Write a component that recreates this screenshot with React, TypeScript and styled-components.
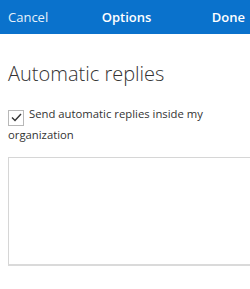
import React from "react";
import styled, { createGlobalStyle } from "styled-components";

const GlobalStyle = createGlobalStyle`
  body {
    margin: 0;
    background: #ffffff;
    font-family: "Open Sans", "Noto Sans", sans-serif;
  }
`;

const Page = styled.div`
  width: 250px;
  height: 289px;
  overflow: hidden;
  background: #ffffff;
`;

const Header = styled.header`
  height: 34px;
  background: #0a72cc;
  display: grid;
  grid-template-columns: 1fr auto 1fr;
  align-items: center;
  padding: 0 5px 0 8px;
  color: #ffffff;
`;

const HeaderButton = styled.span<{ $bold?: boolean }>`
  font-size: 13px;
  font-weight: ${(p) => (p.$bold ? 600 : 400)};
  opacity: ${(p) => (p.$bold ? 1 : 0.9)};
  justify-self: ${(p) => (p.$bold ? "end" : "start")};
`;

const Title = styled.span`
  font-size: 13px;
  font-weight: 600;
`;

const Content = styled.div`
  padding: 26px 0 0 8px;
`;

const Heading = styled.h1`
  margin: 0;
  font-size: 20px;
  font-weight: 300;
  color: #333333;
  line-height: 28px;
`;

const CheckRow = styled.label`
  margin-top: 17px;
  display: block;
  font-size: 11.3px;
  line-height: 18px;
  color: #333333;
  padding-right: 8px;
`;

const Box = styled.span`
  display: inline-flex;
  align-items: center;
  justify-content: center;
  width: 14px;
  height: 14px;
  border: 1px solid #b8b8b8;
  vertical-align: -4px;
  margin-right: 5px;
`;

const Editor = styled.div`
  margin-top: 13px;
  height: 106px;
  border: 1px solid #d6d6d6;
  border-bottom: 2px solid #dadada;
  border-right: none;
`;

export default function App() {
  return (
    <Page>
      <GlobalStyle />
      <Header>
        <HeaderButton>Cancel</HeaderButton>
        <Title>Options</Title>
        <HeaderButton $bold>Done</HeaderButton>
      </Header>
      <Content>
        <Heading>Automatic replies</Heading>
        <CheckRow>
          <Box>
            <svg width="11" height="9" viewBox="0 0 11 9">
              <path d="M1 4.5 L4 7.5 L10 1" fill="none" stroke="#333" strokeWidth="1.4" />
            </svg>
          </Box>
          Send automatic replies inside my organization
        </CheckRow>
        <Editor />
      </Content>
    </Page>
  );
}
